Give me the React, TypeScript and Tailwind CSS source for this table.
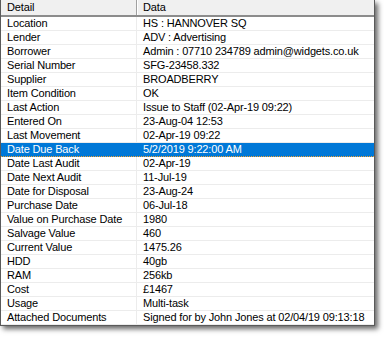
import React from "react";

const rows: [string, string][] = [
  ["Location", "HS : HANNOVER SQ"],
  ["Lender", "ADV : Advertising"],
  ["Borrower", "Admin : 07710 234789 admin@widgets.co.uk"],
  ["Serial Number", "SFG-23458.332"],
  ["Supplier", "BROADBERRY"],
  ["Item Condition", "OK"],
  ["Last Action", "Issue to Staff (02-Apr-19 09:22)"],
  ["Entered On", "23-Aug-04 12:53"],
  ["Last Movement", "02-Apr-19 09:22"],
  ["Date Due Back", "5/2/2019 9:22:00 AM"],
  ["Date Last Audit", "02-Apr-19"],
  ["Date Next Audit", "11-Jul-19"],
  ["Date for Disposal", "23-Aug-24"],
  ["Purchase Date", "06-Jul-18"],
  ["Value on Purchase Date", "1980"],
  ["Salvage Value", "460"],
  ["Current Value", "1475.26"],
  ["HDD", "40gb"],
  ["RAM", "256kb"],
  ["Cost", "£1467"],
  ["Usage", "Multi-task"],
  ["Attached Documents", "Signed for by John Jones at 02/04/19 09:13:18"],
];

export default function App() {
  return (
    <div className="w-[384px] h-[337px] bg-white" style={{ fontFamily: '"Liberation Sans", Arial, sans-serif' }}>
      <div className="w-[375px] border-l border-r border-b border-[#5a5a5a] bg-white text-[11px] tracking-[-0.15px] text-black shadow-[3px_3px_5px_rgba(0,0,0,0.6)]">
        <div className="flex h-[17px] bg-[#f0f0f0] border-b-2 border-[#8c8c8c]">
          <div className="w-[136px] pl-[6px] leading-[15px] border-r border-[#a0a0a0]">Detail</div>
          <div className="flex-1 pl-[5px] leading-[15px] border-l border-white">Data</div>
        </div>
        {rows.map(([k, v], i) => {
          const sel = i === 9;
          return (
            <div
              key={k}
              className={
                sel
                  ? "flex h-[14px] bg-[#0078d7] text-white border-b border-dotted border-[#f0a030]"
                  : "flex h-[14px] border-b border-[#ececec]"
              }
            >
              <div className={sel ? "w-[136px] pl-[6px] leading-[13px] whitespace-nowrap" : "w-[136px] pl-[6px] leading-[13px] whitespace-nowrap border-r border-[#ececec]"}>
                {k}
              </div>
              <div className="flex-1 pl-[6px] leading-[13px] whitespace-nowrap">{v}</div>
            </div>
          );
        })}
      </div>
    </div>
  );
}
